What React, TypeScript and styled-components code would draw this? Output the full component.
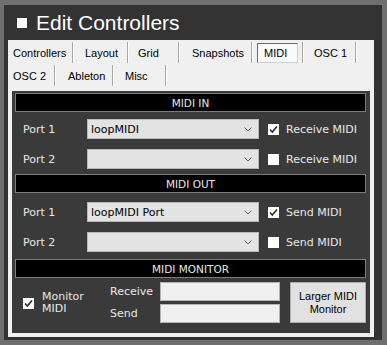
import React from "react";
import styled, { createGlobalStyle } from "styled-components";

const Global = createGlobalStyle`
  html, body { margin: 0; padding: 0; background: #6f6f6f; }
  body { width: 387px; height: 345px; overflow: hidden; }
`;

const Window = styled.div`
  width: 387px;
  height: 345px;
  box-sizing: border-box;
  background: #6f6f6f;
  padding: 5px 5px 5px 4px;
`;

const Frame = styled.div`
  height: 100%;
  box-sizing: border-box;
  background: #333333;
  padding: 0 8px 3px 4px;
  display: flex;
  flex-direction: column;
`;

const TitleBar = styled.div`
  height: 35px;
  flex: none;
  display: flex;
  align-items: center;
  padding-left: 9px;
  gap: 9px;
`;

const TitleSquare = styled.span`
  width: 10px;
  height: 10px;
  background: #ffffff;
  flex: none;
`;

const TitleText = styled.h1`
  margin: 0;
  font-family: "Liberation Sans", Arial, sans-serif;
  font-weight: normal;
  font-size: 21px;
  line-height: 24px;
  color: #ffffff;
  padding-top: 1px;
`;

const Body = styled.div`
  flex: 1;
  background: #f0f0f0;
  padding: 0 4px 4px 4px;
  display: flex;
  flex-direction: column;
`;

const TabStrip = styled.div`
  padding-top: 2px;
  margin-left: -4px;
  display: flex;
  flex-direction: column;
  gap: 2px;
`;

const TabRow = styled.div`
  display: flex;
  height: 21px;
`;

const Tab = styled.div<{ $w: number; $pl: number }>`
  width: ${(p) => p.$w}px;
  height: 21px;
  box-sizing: border-box;
  padding-left: ${(p) => p.$pl}px;
  border-right: 1px solid #a7a7a7;
  box-shadow: 1px 0 0 #ffffff;
  display: flex;
  align-items: center;
  font-family: "Liberation Sans", Arial, sans-serif;
  font-size: 11px;
  color: #000;
  white-space: nowrap;
`;

const SelectedBox = styled.span`
  width: 41px;
  height: 20px;
  margin-left: -7px;
  box-sizing: border-box;
  border: 1px solid;
  border-color: #6d6d6d #cfcfcf #cfcfcf #6d6d6d;
  background: #fafafa;
  display: flex;
  align-items: center;
  padding-left: 6px;
`;

const Panel = styled.div`
  margin-top: 5px;
  flex: 1;
  background: #3a3a3a;
  padding: 2px 4px 0 3px;
  font-family: "DejaVu Sans", Verdana, sans-serif;
  font-size: 11px;
  color: #e8e8e8;
`;

const SectionHeader = styled.div`
  height: 19px;
  box-sizing: border-box;
  border: 1px solid #7c7c7c;
  background: #000000;
  color: #e8e8e8;
  font-size: 10.5px;
  display: flex;
  align-items: center;
  justify-content: center;
`;

const PortList = styled.div<{ $top: number; $bottom: number }>`
  padding: ${(p) => p.$top}px 0 ${(p) => p.$bottom}px 8px;
  display: flex;
  flex-direction: column;
  gap: 10px;
`;

const PortRow = styled.div`
  display: grid;
  grid-template-columns: 64px 172px auto;
  align-items: center;
  height: 20px;
`;

const Label = styled.span`
  white-space: nowrap;
`;

const Select = styled.div`
  height: 20px;
  box-sizing: border-box;
  border: 1px solid #b9b9b9;
  background: #e3e3e3;
  color: #000;
  display: flex;
  align-items: center;
  justify-content: space-between;
  padding: 0 6px 0 3px;
  font-size: 11px;
`;

const CheckGroup = styled.label`
  display: flex;
  align-items: center;
  margin-left: 9px;
  gap: 7px;
  white-space: nowrap;
`;

const Box = styled.span`
  width: 11px;
  height: 11px;
  flex: none;
  background: #ffffff;
  display: flex;
  align-items: center;
  justify-content: center;
`;

const MonitorGrid = styled.div`
  padding: 4px 0 0 8px;
  display: grid;
  grid-template-columns: 87px 50px 120px 76px;
  grid-template-rows: 19px 19px;
  row-gap: 3px;
`;

const MonitorCheck = styled.div`
  grid-row: 1 / span 2;
  display: flex;
  align-items: center;
  gap: 8px;
  padding-top: 1px;
`;

const TwoLine = styled.span`
  line-height: 12px;
`;

const FieldLabel = styled.span`
  display: flex;
  align-items: center;
`;

const Field = styled.div`
  box-sizing: border-box;
  border: 1px solid #b4b4b4;
  background: #f0f0f0;
`;

const Button = styled.button`
  grid-column: 4;
  grid-row: 1 / span 2;
  margin-left: 10px;
  width: 76px;
  height: 41px;
  box-sizing: border-box;
  border: 1px solid #adadad;
  background: #e1e1e1;
  font-family: "Liberation Sans", Arial, sans-serif;
  font-size: 11px;
  line-height: 13px;
  color: #000;
  padding: 0;
  text-align: center;
`;

const Chevron = () => (
  <svg width="8" height="5" viewBox="0 0 8 5">
    <path d="M0.5 0.5 L4 4 L7.5 0.5" fill="none" stroke="#666" strokeWidth="1" />
  </svg>
);

const Check = ({ on }: { on: boolean }) => (
  <Box>
    {on && (
      <svg width="11" height="11" viewBox="0 0 11 11">
        <path d="M2 5.5 L4.3 8 L9 2.5" fill="none" stroke="#2b2b2b" strokeWidth="1.6" />
      </svg>
    )}
  </Box>
);

const Port = ({ name, value, check, on }: { name: string; value: string; check: string; on: boolean }) => (
  <PortRow>
    <Label>{name}</Label>
    <Select>
      <span>{value}</span>
      <Chevron />
    </Select>
    <CheckGroup>
      <Check on={on} />
      <span>{check}</span>
    </CheckGroup>
  </PortRow>
);

export default function App() {
  return (
    <>
      <Global />
      <Window>
        <Frame>
          <TitleBar>
            <TitleSquare />
            <TitleText>Edit Controllers</TitleText>
          </TitleBar>
          <Body>
            <TabStrip>
              <TabRow>
                <Tab $w={65} $pl={5}>Controllers</Tab>
                <Tab $w={55} $pl={12}>Layout</Tab>
                <Tab $w={51} $pl={10}>Grid</Tab>
                <Tab $w={73} $pl={13}>Snapshots</Tab>
                <Tab $w={51} $pl={12}>
                  <SelectedBox>MIDI</SelectedBox>
                </Tab>
                <Tab $w={53} $pl={11}>OSC 1</Tab>
              </TabRow>
              <TabRow>
                <Tab $w={47} $pl={5}>OSC 2</Tab>
                <Tab $w={58} $pl={13}>Ableton</Tab>
                <Tab $w={53} $pl={12}>Misc</Tab>
              </TabRow>
            </TabStrip>
            <Panel>
              <SectionHeader>MIDI IN</SectionHeader>
              <PortList $top={7} $bottom={5}>
                <Port name="Port 1" value="loopMIDI" check="Receive MIDI" on />
                <Port name="Port 2" value="" check="Receive MIDI" on={false} />
              </PortList>
              <SectionHeader>MIDI OUT</SectionHeader>
              <PortList $top={9} $bottom={7}>
                <Port name="Port 1" value="loopMIDI Port" check="Send MIDI" on />
                <Port name="Port 2" value="" check="Send MIDI" on={false} />
              </PortList>
              <SectionHeader>MIDI MONITOR</SectionHeader>
              <MonitorGrid>
                <MonitorCheck>
                  <Check on />
                  <TwoLine>
                    Monitor
                    <br />
                    MIDI
                  </TwoLine>
                </MonitorCheck>
                <FieldLabel>Receive</FieldLabel>
                <Field />
                <Button>
                  Larger MIDI
                  <br />
                  Monitor
                </Button>
                <FieldLabel>Send</FieldLabel>
                <Field />
              </MonitorGrid>
            </Panel>
          </Body>
        </Frame>
      </Window>
    </>
  );
}
